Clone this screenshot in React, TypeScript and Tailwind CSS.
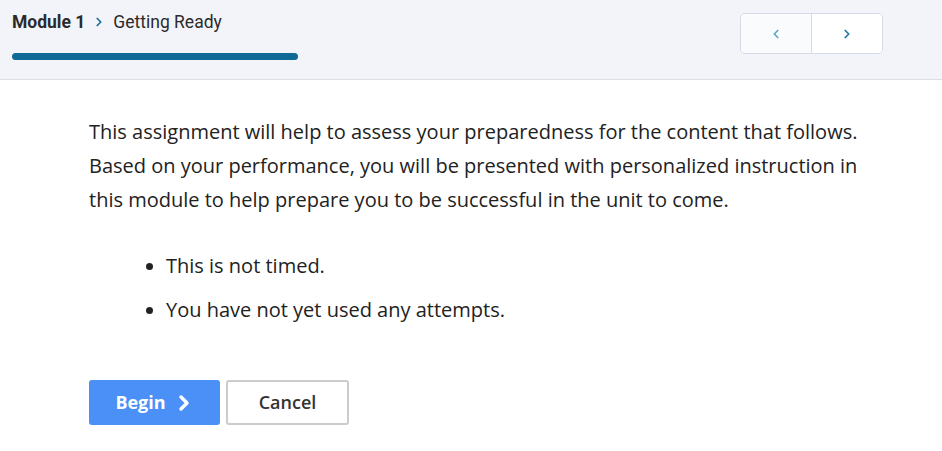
import { ChevronLeft, ChevronRight } from 'lucide-react';

const Header = () => (
  <div className="h-[80px] bg-[#f3f4f9] border-b border-[#dcdfe8] flex items-start justify-between px-3 pr-[59px]">
    <div className="pt-[10px] w-[286px]">
      <div className="flex items-center gap-[7px] text-[17.5px] text-[#2b2b2b] font-['Roboto',sans-serif] leading-[24px]">
        <span className="font-bold">Module 1</span>
        <ChevronRight size={14} strokeWidth={3} className="text-[#1f6f99]" />
        <span>Getting Ready</span>
      </div>
      <div className="mt-[19px] h-[7px] w-[286px] rounded-full bg-[#0f6a96]" />
    </div>
    <div className="mt-[13px] flex h-[41px] w-[143px] rounded-[5px] border border-[#d5dae9] overflow-hidden">
      <button className="flex-1 flex items-center justify-center bg-[#fafbfd] border-r border-[#d5dae9]">
        <ChevronLeft size={14} strokeWidth={3} className="text-[#5fa6c8]" />
      </button>
      <button className="flex-1 flex items-center justify-center bg-white">
        <ChevronRight size={14} strokeWidth={3} className="text-[#1f7aa3]" />
      </button>
    </div>
  </div>
);

export default function App() {
  return (
    <div className="w-[942px] h-[451px] bg-white font-['Open_Sans',sans-serif] text-[#222]">
      <Header />
      <div className="pl-[89px] pr-[60px] pt-[35px]">
        <p className="text-[20px] leading-[34px]">
          This assignment will help to assess your preparedness for the content that follows. Based on your
          performance, you will be presented with personalized instruction in this module to help prepare you to be
          successful in the unit to come.
        </p>
        <ul className="mt-[32px] pl-[57px] flex flex-col gap-[10px]">
          <li className="flex items-center text-[20px] leading-[34px]">
            <span className="w-[7px] h-[7px] rounded-full bg-[#222] mr-[13px]" />
            This is not timed.
          </li>
          <li className="flex items-center text-[20px] leading-[34px]">
            <span className="w-[7px] h-[7px] rounded-full bg-[#222] mr-[13px]" />
            You have not yet used any attempts.
          </li>
        </ul>
        <div className="mt-[53px] flex gap-[6px]">
          <button className="w-[131px] h-[45px] rounded-[3px] bg-[#4a90f7] text-white text-[18px] font-bold flex items-center justify-center gap-[6px] pl-[2px]">
            Begin
            <ChevronRight size={24} strokeWidth={3.5} />
          </button>
          <button className="w-[123px] h-[45px] rounded-[3px] border-2 border-[#cccccc] bg-white text-[18px] font-semibold text-[#333]">
            Cancel
          </button>
        </div>
      </div>
    </div>
  );
}
